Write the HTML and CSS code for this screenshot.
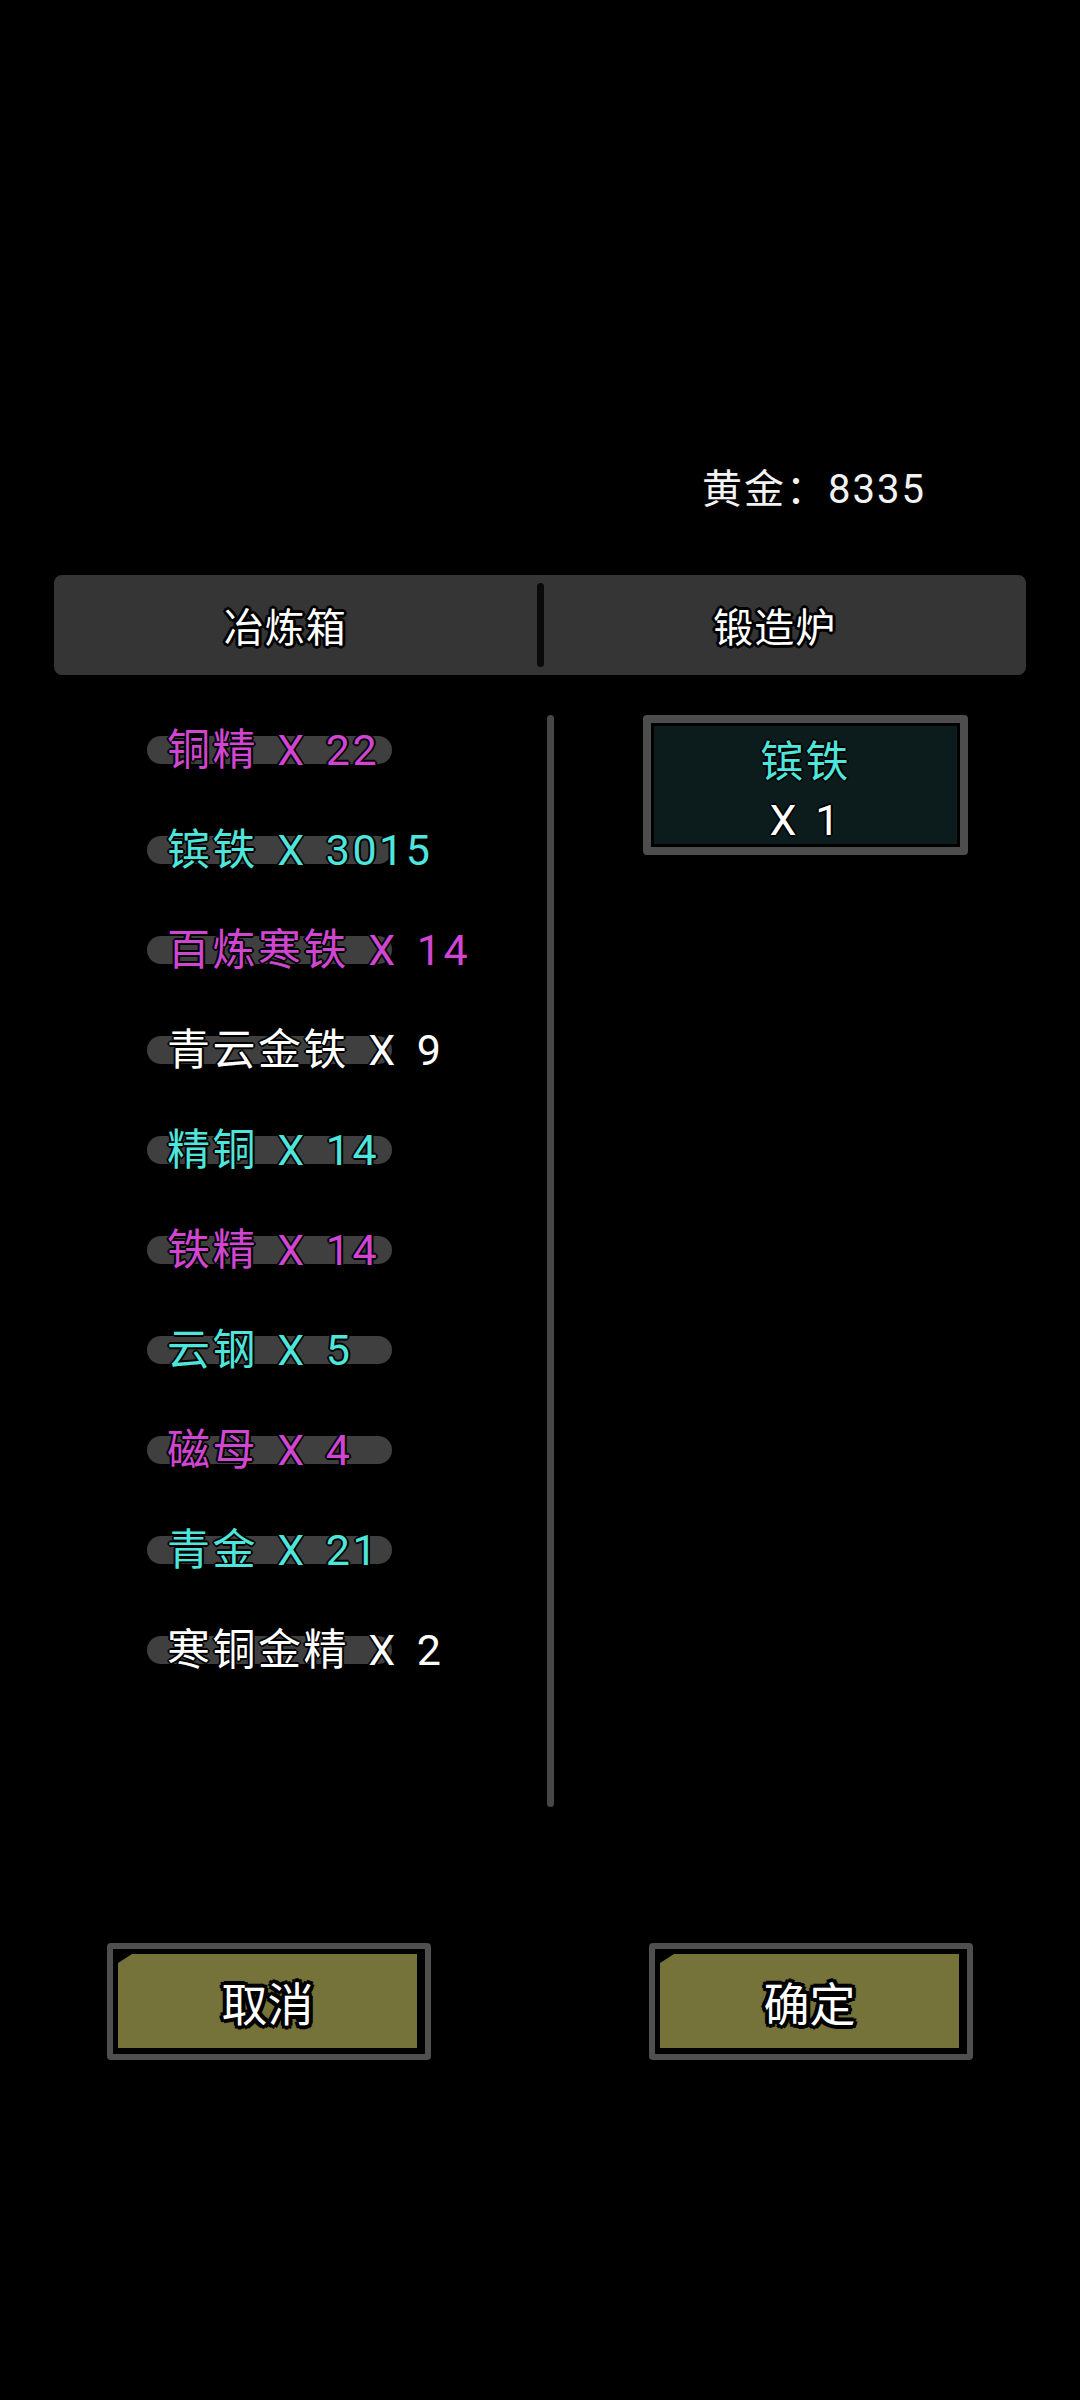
FILE: index.html
```html
<!DOCTYPE html>
<html lang="zh-CN">
<head>
<meta charset="utf-8">
<title>锻造</title>
<link rel="stylesheet" href="styles.css">
</head>
<body>
<div class="screen">
  <div class="gold">黄金：8335</div>

  <div class="tabs">
    <div class="tab">冶炼箱</div>
    <div class="tab-divider"></div>
    <div class="tab">锻造炉</div>
  </div>

  <div class="content">
    <div class="list">
      <div class="item purple">铜精 X 22</div>
      <div class="item cyan">镔铁 X 3015</div>
      <div class="item purple">百炼寒铁 X 14</div>
      <div class="item white">青云金铁 X 9</div>
      <div class="item cyan">精铜 X 14</div>
      <div class="item purple">铁精 X 14</div>
      <div class="item cyan">云钢 X 5</div>
      <div class="item purple">磁母 X 4</div>
      <div class="item cyan">青金 X 21</div>
      <div class="item white">寒铜金精 X 2</div>
    </div>
    <div class="scrollbar"></div>
    <div class="forge">
      <div class="forge-box">
        <div class="forge-name">镔铁</div>
        <div class="forge-count">X 1</div>
      </div>
    </div>
  </div>

  <div class="actions">
    <div class="btn"><div class="btn-face">取消</div></div>
    <div class="btn"><div class="btn-face">确定</div></div>
  </div>
</div>
</body>
</html>
```

FILE: styles.css
```css
html, body {
  margin: 0;
  padding: 0;
  background: #000;
}

.screen {
  width: 1080px;
  height: 2400px;
  background: #000;
  font-family: "Roboto", "Noto Sans CJK SC", "Noto Sans", sans-serif;
  color: #fff;
  overflow: hidden;
}

.gold {
  padding-top: 462px;
  padding-left: 702px;
  height: 56px;
  line-height: 56px;
  font-size: 40px;
  letter-spacing: 2px;
  color: #f2f2f2;
}

.tabs {
  margin: 57px 54px 0;
  height: 100px;
  background: #353535;
  border-radius: 8px;
  display: flex;
  align-items: center;
}

.tab {
  flex: 1;
  text-align: center;
  padding-right: 20px;
  font-family: "Noto Sans CJK SC", sans-serif;
  font-size: 40px;
  letter-spacing: 1px;
  line-height: 100px;
  color: #fff;
  text-shadow:
    3px 0 0 #000, -3px 0 0 #000, 0 3px 0 #000, 0 -3px 0 #000,
    2px 2px 0 #000, -2px 2px 0 #000, 2px -2px 0 #000, -2px -2px 0 #000,
    0 0 3px #000;
}

.tab-divider {
  width: 7px;
  height: 84px;
  background: #0a0a0a;
  border-radius: 4px;
}

.content {
  margin-top: 40px;
  height: 1092px;
  display: flex;
}

.list {
  position: relative;
  z-index: 0;
  width: 547px;
  box-sizing: border-box;
  padding-left: 147px;
  display: flex;
  flex-direction: column;
  gap: 30px;
}

.item {
  position: relative;
  height: 70px;
  line-height: 70px;
  padding-left: 20px;
  font-size: 43px;
  letter-spacing: 2.5px;
  word-spacing: 6px;
  white-space: nowrap;
  text-shadow:
    2px 0 0 #000, -2px 0 0 #000, 0 2px 0 #000, 0 -2px 0 #000,
    1px 1px 0 #000, -1px 1px 0 #000, 1px -1px 0 #000, -1px -1px 0 #000;
}

.item::before {
  content: "";
  position: absolute;
  left: 0;
  top: 21px;
  width: 245px;
  height: 28px;
  border-radius: 14px;
  background: #3f3f3f;
  z-index: -1;
}

.purple { color: #d046d2; }
.cyan { color: #4ee6dc; }
.white { color: #ffffff; }

.scrollbar {
  width: 7px;
  height: 100%;
  background: #474747;
  border-radius: 4px;
}

.forge {
  flex: 1;
  padding-left: 89px;
}

.forge-box {
  width: 325px;
  height: 140px;
  box-sizing: border-box;
  border: 8px solid #4d4d4d;
  border-radius: 4px;
  background: #0c1c1c;
  box-shadow: inset 0 0 0 3px #000;
  padding-top: 10px;
  text-align: center;
  font-size: 43px;
  letter-spacing: 2px;
  word-spacing: 4px;
  line-height: 58px;
  overflow: hidden;
}

.forge-name {
  color: #4ee6dc;
  text-shadow:
    2px 0 0 #000, -2px 0 0 #000, 0 2px 0 #000, 0 -2px 0 #000;
}

.forge-count {
  color: #fff;
  text-shadow:
    2px 0 0 #000, -2px 0 0 #000, 0 2px 0 #000, 0 -2px 0 #000;
}

.actions {
  margin-top: 136px;
  padding-left: 107px;
  display: flex;
  gap: 218px;
}

.btn {
  width: 324px;
  height: 117px;
  box-sizing: border-box;
  border: 6px solid #4f4f4f;
  border-radius: 4px;
  background: #000;
  padding: 5px 8px 6px 5px;
}

.btn-face {
  height: 100%;
  background: #75733a;
  clip-path: polygon(14px 0, 100% 0, 100% 100%, 0 100%, 0 9px);
  display: flex;
  align-items: center;
  justify-content: center;
  font-family: "Noto Sans CJK SC", sans-serif;
  font-size: 46px;
  color: #fff;
  text-shadow:
    4px 0 0 #000, -4px 0 0 #000, 0 4px 0 #000, 0 -4px 0 #000,
    3px 3px 0 #000, -3px 3px 0 #000, 3px -3px 0 #000, -3px -3px 0 #000,
    0 0 4px #000;
}
```
